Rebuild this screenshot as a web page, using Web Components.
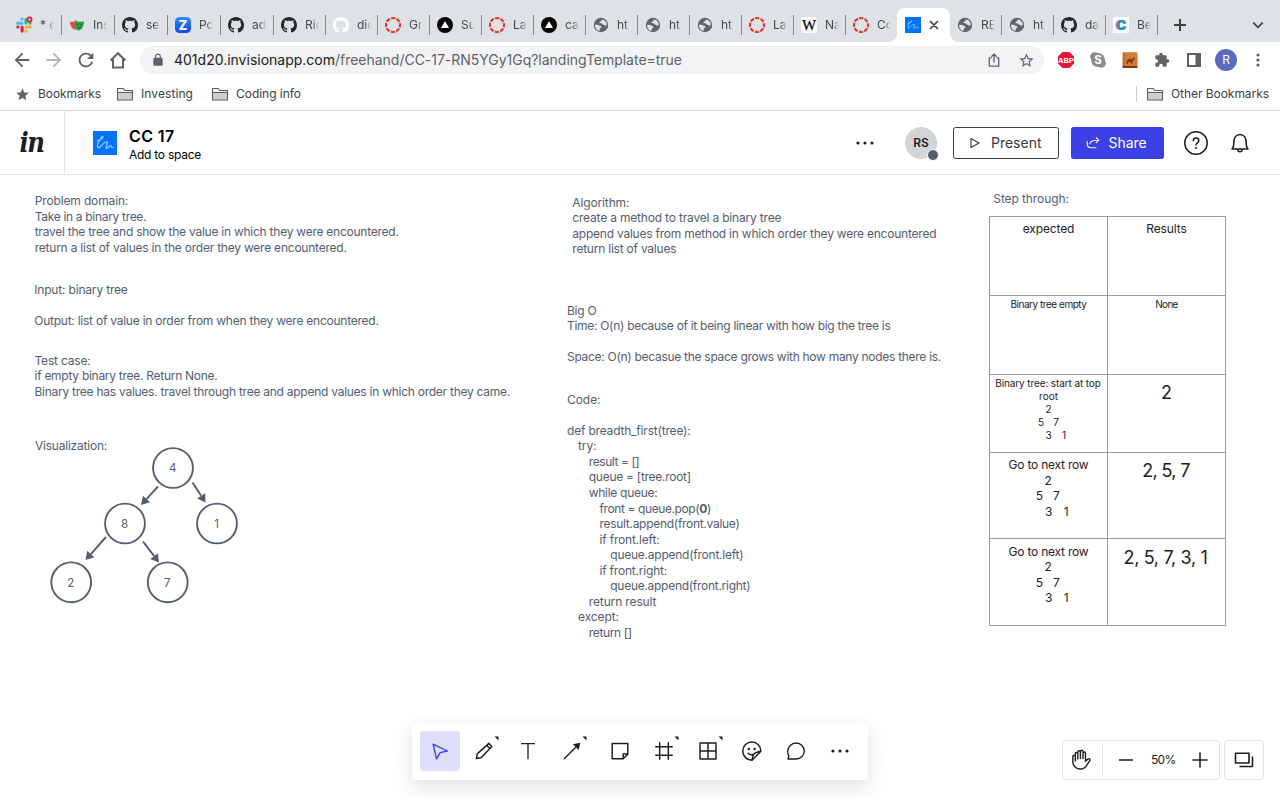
<!DOCTYPE html>
<html lang="en">
<head>
<meta charset="utf-8">
<title>CC 17</title>
<style>
html,body{margin:0;height:100%;overflow:hidden;background:#fff}
body{font-family:Inter,"Liberation Sans",sans-serif;color:#1d1d1f}
</style>
</head>
<body>
<free-app></free-app>
<script>
const GH='<path fill="currentColor" d="M8 0C3.58 0 0 3.58 0 8c0 3.54 2.29 6.53 5.47 7.59.4.07.55-.17.55-.38 0-.19-.01-.82-.01-1.49-2.01.37-2.53-.49-2.69-.94-.09-.23-.48-.94-.82-1.13-.28-.15-.68-.52-.01-.53.63-.01 1.08.58 1.23.82.72 1.21 1.87.87 2.33.66.07-.52.28-.87.51-1.07-1.78-.2-3.64-.89-3.64-3.95 0-.87.31-1.59.82-2.15-.08-.2-.36-1.02.08-2.12 0 0 .67-.21 2.2.82.64-.18 1.32-.27 2-.27.68 0 1.36.09 2 .27 1.53-1.04 2.2-.82 2.2-.82.44 1.1.16 1.92.08 2.12.51.56.82 1.27.82 2.15 0 3.07-1.87 3.75-3.65 3.95.29.25.54.73.54 1.48 0 1.07-.01 1.93-.01 2.2 0 .21.15.46.55.38A8.013 8.013 0 0016 8c0-4.42-3.58-8-8-8z"/>';
const line=(s,w=1.5)=>`<g fill="none" stroke="currentColor" stroke-width="${w}" stroke-linejoin="round" stroke-linecap="round">${s}</g>`;
/* name: [viewBox size, markup] */
const ICONS={
 slack:[16,'<g stroke-width="3.1" stroke-linecap="round" fill="none"><path stroke="#36c5f0" d="M1.7 6.2h4.2M6.1 1.8v.3"/><path stroke="#2eb67d" d="M10 2.6v3.4M14 6.1h.2"/><path stroke="#e01e5a" d="M6.1 10v4.1M1.8 10h.3"/><path stroke="#ecb22e" d="M10.2 10h4M10 14v.2"/></g><circle cx="13.5" cy="2.6" r="3" fill="#e0243c"/><circle cx="13.5" cy="2.6" r="1.1" fill="#fff"/>'],
 masks:[16,'<path fill="#e2574c" d="M1 4.5c2 .7 3.800.3 5.500-.3l2 7.200c-1.500 1.600-3.500 1.500-4.700.300C2 10 .8 7 1 4.500z"/><path fill="#2a9e44" d="M6 3c2.500 2 6.500 2.200 9 1.300.2 3.500-1.600 8.800-5.500 9.200C6.300 12.800 5.300 7.500 6 3z"/><path stroke="#0d5c22" stroke-width=".9" fill="none" d="M7.700 7l1.600.5M11.500 7.500l1.600-.3M8.300 10c1.200 1 2.500 1.100 3.800.2"/><path stroke="#8c2720" stroke-width=".7" fill="none" d="M2.500 6.700l1.300.1M3.500 10l1.500-.8"/>'],
 github:[16,GH],
 zed:[16,'<defs><linearGradient id="z" x2="0" y2="1"><stop stop-color="#2f8bff"/><stop offset="1" stop-color="#0b49e8"/></linearGradient></defs><rect width="16" height="16" rx="4.500" fill="url(#z)"/><text x="8" y="12.700" text-anchor="middle" font-family="Inter" font-weight="800" font-size="13" fill="#fff">Z</text>'],
 canvas:[16,'<circle cx="8" cy="8" r="7" fill="none" stroke="#e43b2f" stroke-width="2.2" stroke-dasharray="4.200 1.298" stroke-dashoffset="2.100"/>'],
 tri:[16,'<circle cx="8" cy="8" r="8"/><path fill="#fff" d="M8 4l4 7H4z"/>'],
 globe:[16,'<circle cx="8" cy="8" r="7.200" fill="#5f6368"/><path fill="#dee1e6" d="M8.700 2.400c.2 1.200-.5 1.700-1.500 2-.7.3-.6 1.200-1.400 1.500 1.200.7 3.100-.2 3.700 1.300.3.900 1.700.2 2.300 1.300.4.600 1.600.2 2.100-.7C14 5 11.700 2.600 8.700 2.400zM1.900 7.700c1.500.100 3.300-.1 4.300.800 1 .8 2.300.3 2.200 1.500-.1 1-1.600.8-1.500 2 0 .9-.9 1.400-.2 1.900C4 13.500 2 11 1.900 7.700z"/>'],
 wiki:[16,'<rect width="16" height="16" rx="3" fill="#fff"/><text x="8" y="12.700" text-anchor="middle" font-family="Liberation Serif" font-size="15" stroke="#000" stroke-width=".25">W</text>'],
 freehand:[24,'<path fill="#0074ff" d="M0 0h24v24H0z"/><path fill="none" stroke="#8ec4ff" stroke-width="1.400" stroke-linecap="round" stroke-linejoin="round" d="M4.500 9.800C7 9.300 10.500 7 10 5.700 9.200 4.300 3.800 12.500 4.600 15.800 5.800 19.400 10 11 13.800 10.900 16 11.300 12.200 15.500 13.400 17 15 18.200 16 14.300 17.800 14.600 18.700 15 18 17 20.300 16.600"/>'],
 cee:[16,'<rect width="16" height="16" fill="#fff"/><g text-anchor="middle" font-family="Inter" font-weight="800" font-size="13.500"><text x="7.200" y="12.700" fill="#f0483e">C</text><text x="8.800" y="13.100" fill="#2bb673">C</text><text x="8.200" y="12.900" fill="#1b95c9">C</text></g>'],
 close:[10,line('<path d="M1.500 1.500l7 7m0-7l-7 7"/>',1.7)],
 plus:[14,'<path fill="none" stroke="currentColor" stroke-width="2" d="M7 1v12M1 7h12"/>'],
 chev:[12,'<path fill="none" stroke="currentColor" stroke-width="1.800" d="M1.300 3.600L6 8.300l4.700-4.700"/>'],
 back:[24,'<path fill="currentColor" d="M20 11H7.830l5.590-5.590L12 4l-8 8 8 8 1.410-1.410L7.830 13H20v-2z"/>'],
 fwd:[24,'<path fill="currentColor" d="M12 4l-1.410 1.410L16.170 11H4v2h12.170l-5.580 5.590L12 20l8-8z"/>'],
 reload:[24,'<path fill="currentColor" d="M17.650 6.350C16.200 4.900 14.210 4 12 4c-4.420 0-7.990 3.580-7.990 8s3.570 8 7.990 8c3.730 0 6.840-2.550 7.730-6h-2.080c-.82 2.330-3.040 4-5.650 4-3.310 0-6-2.690-6-6s2.690-6 6-6c1.660 0 3.140.690 4.220 1.780L13 11h7V4l-2.350 2.350z"/>'],
 home:[22,'<path fill="none" stroke="currentColor" stroke-width="2" d="M3.600 11.500L11 4.200l7.400 7.300M6 10v8.500h10V10"/>'],
 lock:[24,'<path fill="currentColor" d="M18 8h-1V6c0-2.760-2.240-5-5-5S7 3.240 7 6v2H6c-1.100 0-2 .9-2 2v10c0 1.100.9 2 2 2h12c1.100 0 2-.9 2-2V10c0-1.100-.9-2-2-2zM9 6c0-1.660 1.340-3 3-3s3 1.340 3 3v2H9V6z"/>'],
 upload:[16,'<path fill="none" stroke="currentColor" stroke-width="1.300" stroke-linejoin="round" d="M5.500 5.800H3.300v8.400h9.400V5.800h-2.200M8 10.500V2.200M5.300 4.700L8 2l2.700 2.700"/>'],
 star:[24,'<path fill="currentColor" d="M22 9.240l-7.190-.620L12 2 9.190 8.630 2 9.240l5.460 4.730L5.820 21 12 17.270 18.180 21l-1.630-7.030L22 9.240zM12 15.400l-3.760 2.270 1-4.280-3.320-2.880 4.380-.380L12 6.100l1.710 4.040 4.380.380-3.320 2.880 1 4.280L12 15.400z"/>'],
 starf:[24,'<path fill="currentColor" d="M12 17.270L18.180 21l-1.640-7.030L22 9.240l-7.190-.610L12 2 9.190 8.630 2 9.240l5.460 4.730L5.820 21z"/>'],
 folder:[18,'<path fill="#d0d0d0" stroke="#5a5d61" stroke-width="1.100" stroke-linejoin="round" d="M1.500 15V3.500h5.700l1.500 2h7.800V15z"/><path stroke="#5a5d61" fill="none" stroke-width="1" d="M1.500 7.500h15"/><path fill="#f6f6f6" d="M2.100 4.100h4.800l1.500 2h7.500v.9H2.100z"/>'],
 abp:[18,'<path fill="#f4103c" d="M5.500 1h7L17 5.500v7L12.500 17h-7L1 12.500v-7z"/><text x="9" y="11.900" text-anchor="middle" font-family="Liberation Sans" font-weight="700" font-size="7.500" fill="#fff">ABP</text>'],
 skype:[16,'<g fill="#8c8c8c"><circle cx="8" cy="8" r="7"/><circle cx="4.700" cy="4.700" r="4.500"/><circle cx="11.300" cy="11.300" r="4.500"/></g><text x="8" y="12.200" text-anchor="middle" font-family="Inter" font-weight="700" font-size="11.500" fill="#fff">S</text>'],
 camel:[16,'<rect x=".5" y=".3" width="15" height="15.400" rx="1.200" fill="#d27a35"/><path fill="#713b16" d="M.5 14h15v1.200a1 1 0 01-1 .8H1.500a1 1 0 01-1-.8z"/><path stroke="#8a491b" fill="none" stroke-width="1" stroke-dasharray="1 1" d="M2 1v13"/><path fill="#6e3814" d="M4.600 12l.5-3.500c.8-2 1.500-2 2.200-.8.8-1.600 1.700-1.300 2.300.4.900.1 1-2.200 2-2.600l1.300.8-1 .6c-.4 1.500-.8 2.200-1.700 2.700L10 12H9l-.2-2.200H6.500L5.700 12z"/>'],
 ext:[24,'<path fill="currentColor" d="M20.500 11H19V7c0-1.100-.9-2-2-2h-4V3.500C13 2.120 11.880 1 10.500 1S8 2.120 8 3.500V5H4c-1.100 0-1.990.9-1.990 2v3.800H3.500c1.490 0 2.700 1.210 2.700 2.700s-1.210 2.700-2.700 2.700H2V20c0 1.100.9 2 2 2h3.800v-1.500c0-1.490 1.210-2.700 2.700-2.700 1.490 0 2.700 1.210 2.700 2.700V22H17c1.100 0 2-.9 2-2v-4h1.500c1.380 0 2.500-1.120 2.500-2.500S21.880 11 20.500 11z"/>'],
 panel:[16,'<path fill="currentColor" fill-rule="evenodd" d="M1 1h14v14H1zM3 3v10h6.500V3z"/>'],
 vdots:[16,'<g fill="currentColor"><circle cx="8" cy="3" r="1.600"/><circle cx="8" cy="8" r="1.600"/><circle cx="8" cy="13" r="1.600"/></g>'],
 dots:[24,'<g fill="currentColor"><circle cx="5" cy="12" r="1.600"/><circle cx="12" cy="12" r="1.600"/><circle cx="19" cy="12" r="1.600"/></g>'],
 play:[12,line('<path d="M2 1.600l8 4.400-8 4.400z"/>',1.1)],
 share:[14,line('<path d="M1.200 5.500v2.200c0 3 1.500 4 4 4h4.700M3.800 7.800C4.600 5 6.500 4.200 12.800 4.200M10.200 1.600l2.600 2.600-2.600 2.600"/>',1.1)],
 help:[24,line('<circle cx="12" cy="12" r="11.200"/><path d="M9.300 9.700c0-3.500 5.500-3.500 5.500 0 0 2.200-2.800 2.100-2.800 4.400"/>',1.5)+'<circle cx="12" cy="17" r="1" fill="currentColor"/>'],
 bell:[24,line('<path d="M4 18c1.500-1.300 1.800-3.300 1.800-6.500 0-4.800 2.400-8 6.200-8s6.200 3.200 6.200 8c0 3.200.3 5.200 1.800 6.500zM9.800 18.500c.3 3 4.100 3 4.400 0"/>',1.6)],
 cursor:[24,line('<path d="M4.500 4.500l15.500 7.500-7.800 1.700-4 6.800z"/>',1.5)],
 pen:[24,line('<path d="M3.700 20.200l.9-5.100L17.300 3.700l3.200 3.300L8.800 19.300zM15 5.900l3.200 3.200"/>',1.6)],
 text:[24,line('<path d="M5 4h14M12 4v16.500"/>',1.4)],
 arrow:[24,line('<path d="M3.500 20.500L18 6"/>',1.5)+'<path fill="currentColor" d="M13 4.700l8-1.700-1.700 8z"/>'],
 note:[24,line('<path d="M3.500 3.700h17v11.800L15.500 20.500h-12zM20.500 15.300h-5v5"/>',1.600)],
 frame:[24,line('<path d="M7.300 3v18M16.700 3v18M3 7.300h18M3 16.700h18"/>',1.600)],
 grid:[24,line('<path d="M3.300 3.300h17.400v17.400H3.300zM12 3.300v17.400M3.300 12h17.400"/>',1.600)],
 sticker:[24,line('<path d="M20.900 12.200A9.100 9.100 0 1012 21.200zM12 21.200c1-4-.2-7.500 8.900-9M8 14.300c1.300 1.600 3 1.700 4.800 1.300"/>',1.500)+'<circle cx="8.800" cy="10" r="1.200" fill="currentColor"/><circle cx="14.600" cy="10" r="1.200" fill="currentColor"/>'],
 bubble:[24,line('<path d="M3.300 20.700l.9-3.500C2.900 15.500 2.900 14 2.900 12.300 3 7.300 7.200 3.300 12.200 3.300c5 0 8.800 4 8.800 8.700s-3.800 8.700-8.800 8.700z"/>',1.5)],
 flag:[5,'<path fill="currentColor" d="M.5.500h4v4z"/>'],
 hand:[24,line('<path d="M6.300 13V5.800a1.200 1.200 0 012.500 0V11M8.800 10.500V4.100a1.300 1.300 0 012.600 0V10.500M11.400 10V3.600a1.300 1.300 0 012.600 0V10.500M14 10.500V5.200a1.250 1.250 0 012.500 0V13.200l2.400-2.200c1.300-.8 2.700.5 1.900 1.700l-3.200 4.600c-1.500 2.500-3.300 3.700-5.900 3.700-4.600 0-7.900-3-7.900-7.500V8.500a1.250 1.250 0 012.500 0"/>',1.4)],
 minus:[16,'<path stroke="currentColor" stroke-width="1.500" d="M1 8h14"/>'],
 plusz:[16,'<path stroke="currentColor" stroke-width="1.500" d="M.5 8h15M8 .5v15"/>'],
 layers:[24,'<path fill="none" stroke="currentColor" stroke-width="1.600" stroke-linejoin="round" d="M3.500 5.200h13.500v9.800H3.500zM20.500 8.500v10H7.500"/>']
};

class Base extends HTMLElement{
  connectedCallback(){
    if(this.shadowRoot)return;
    this.attachShadow({mode:'open'}).innerHTML=`<style>*{box-sizing:border-box}${this.css()}</style>${this.html()}`;
    this.ready&&this.ready();
  }
}
const def=(name,css,html,ready)=>customElements.define(name,class extends Base{
  css(){return typeof css==='function'?css(this):css}
  html(){return typeof html==='function'?html(this):html}
  ready(){ready&&ready(this)}
});

def('ui-icon',':host{display:block;flex:none}svg{display:block;overflow:visible}',e=>{
  const [vb,m]=ICONS[e.getAttribute('name')],s=e.getAttribute('size')||vb;
  return `<svg width="${s}" height="${s}" viewBox="0 0 ${vb} ${vb}">${m}</svg>`;
});

/* One line of text tracked so that it spans the width given in "w". */
def('fit-text',':host{display:block;white-space:pre;flex:none}span{display:inline-block}','<span><slot></slot></span>',e=>{
  const w=+e.getAttribute('w'),s=e.shadowRoot.querySelector('span');
  if(!w)return;
  const n=e.textContent.length,nat=s.getBoundingClientRect().width;
  s.style.letterSpacing=((w-nat)/n).toFixed(4)+'px';
});

def('browser-tab',`
:host{display:flex;align-items:center;height:42px;padding:8px 0 0 7px;width:var(--w,52px);position:relative;color:#45484c;flex:none}
.t{margin-left:8px;width:14px;overflow:hidden;white-space:nowrap;font-size:12px;line-height:16px;-webkit-mask-image:linear-gradient(90deg,#000 55%,transparent)}
.s{margin-left:auto;width:1px;height:20px;background:#85888d}
:host([wide]){--w:53px}
:host([active]){background:#fff;height:34px;align-self:flex-end;padding:0 0 0 8px;border-radius:8px 8px 0 0;--w:53px;margin-left:-1px;z-index:1}
:host([active])::before,:host([active])::after{content:"";position:absolute;bottom:0;width:8px;height:8px}
:host([active])::before{left:-8px;background:radial-gradient(circle at 0 0,transparent 7.500px,#fff 8px)}
:host([active])::after{right:-8px;background:radial-gradient(circle at 100% 0,transparent 7.500px,#fff 8px)}
.x{margin-left:8px;color:#3c4043}
`,e=>`<ui-icon name="${e.getAttribute('icon')}" size="16" style="color:${e.getAttribute('tint')||'#24292f'}"></ui-icon>`+
 (e.hasAttribute('active')?'<ui-icon class="x" name="close" size="10"></ui-icon>':`<div class="t"><slot></slot></div>${e.hasAttribute('last')?'':'<div class="s"></div>'}`));

const TABS=[['slack','* c',1],['masks','Ins',1],['github','se',1],['zed','Po',1],['github','ad',1],['github','Ric'],['github','dic',0,'#fff'],['canvas','Gr'],['tri','Su'],['canvas','La'],['tri','ca'],['globe','ht'],['globe','ht'],['globe','ht'],['canvas','La'],['wiki','Na'],['canvas','Co'],0,['globe','RE'],['globe','ht'],['github','da'],['cee','Be']];
def('tab-strip',`:host{display:flex;background:#dee1e6;height:42px;padding-left:9px;align-items:flex-start;color:#3c4043}
.p{margin:18px 0 0 15px}.c{margin:19px 16px 0 auto}`,
()=>TABS.map((t,i)=>t?`<browser-tab icon="${t[0]}" ${t[2]?'wide':''} ${t[3]?`tint="${t[3]}"`:''} ${i===16?'last':''}>${t[1]}</browser-tab>`:'<browser-tab active icon="freehand"></browser-tab>').join('')+
'<ui-icon class="p" name="plus" size="14"></ui-icon><ui-icon class="c" name="chev" size="12"></ui-icon>');

def('nav-bar',`:host{display:flex;align-items:center;height:36px;padding:0 6px;color:#5f6368;background:#fff}
.b{width:32px;height:32px;display:flex;align-items:center;justify-content:center}
.o{flex:1;height:28px;border-radius:14px;background:#f1f3f4;margin:0 6px;display:flex;align-items:center;padding:0 2px 0 11px;font-size:14px;line-height:20px}
.o .l{margin-right:9px}.d{color:#202124}.r{margin-left:auto;display:flex}.dim{color:#b4b6b9}
.av{width:22px;height:22px;border-radius:50%;background:#5c6bc0;color:#fff;font-size:12px;line-height:22px;text-align:center}`,
`<div class="b"><ui-icon name="back" size="22"></ui-icon></div><div class="b dim"><ui-icon name="fwd" size="22"></ui-icon></div><div class="b"><ui-icon name="reload" size="22"></ui-icon></div><div class="b"><ui-icon name="home" size="22"></ui-icon></div>
<div class="o"><ui-icon class="l" name="lock" size="14"></ui-icon><fit-text class="d" w="161">401d20.invisionapp.com</fit-text><fit-text w="347">/freehand/CC-17-RN5YGy1Gq?landingTemplate=true</fit-text>
<div class="r"><div class="b"><ui-icon name="upload" size="16"></ui-icon></div><div class="b"><ui-icon name="star" size="17"></ui-icon></div></div></div>
<div class="b"><ui-icon name="abp" size="18"></ui-icon></div><div class="b"><ui-icon name="skype" size="16"></ui-icon></div><div class="b"><ui-icon name="camel" size="16"></ui-icon></div><div class="b"><ui-icon name="ext" size="16"></ui-icon></div><div class="b"><ui-icon name="panel" size="16"></ui-icon></div><div class="b"><div class="av">R</div></div><div class="b"><ui-icon name="vdots" size="16"></ui-icon></div>`);

def('bookmark-bar',`:host{display:flex;align-items:center;height:33px;border-bottom:1px solid #d6d7d9;padding:0 11px 0 15px;font-size:12px;line-height:16px;color:#3c4043;background:#fff;box-sizing:border-box}
ui-icon{margin-right:7px}.st{color:#5f6368;margin-right:8px}fit-text{margin-right:15px}.sep{margin-left:auto;width:1px;height:16px;background:#c9cbce;margin-right:9px}fit-text:last-child{margin-right:0}`,
`<ui-icon class="st" name="starf" size="15"></ui-icon><fit-text w="63">Bookmarks</fit-text><ui-icon name="folder" size="18"></ui-icon><fit-text w="52">Investing</fit-text><ui-icon name="folder" size="18" style="margin-left:3px"></ui-icon><fit-text w="65">Coding info</fit-text><div class="sep"></div><ui-icon name="folder" size="18"></ui-icon><fit-text w="98">Other Bookmarks</fit-text>`);

def('app-header',`:host{display:flex;align-items:center;height:64px;box-sizing:border-box;border-bottom:1px solid #e4e5e7;padding-right:28px;background:#fff;color:#1d1d1f}
.logo{width:65px;height:63px;border-right:1px solid #e4e5e7;display:flex;align-items:center;justify-content:center;font:italic 700 27px/30px "DejaVu Serif Condensed","DejaVu Serif",serif;font-stretch:condensed;letter-spacing:-1.500px;padding:1px 1px 0 0}
.fh{margin-left:28px}.t{margin-left:12px;display:flex;flex-direction:column;color:#000;padding-top:4px}
.n{font-size:16px;font-weight:600;line-height:20px}.a{font-size:12px;line-height:18px}
.r{margin-left:auto;display:flex;align-items:center}
.av{width:32px;height:32px;border-radius:50%;background:#d3d4d6;margin:0 16px 0 28px;font-size:12px;font-weight:600;line-height:32px;text-align:center;position:relative}
.av i{position:absolute;right:-2px;bottom:-2px;width:12px;height:12px;box-sizing:border-box;border:1.700px solid #fff;border-radius:50%;background:#545c70}
.btn{display:flex;align-items:center;height:32px;border-radius:2.500px;font-size:14px;line-height:20px}
.p{width:106px;border:1px solid #3c3c40;padding-left:15px;margin-right:12px;color:#3a3a3f}.p ui-icon{margin-right:10px}
.s{width:93px;background:#3b3fe6;color:#fff;padding-left:15px;margin-right:20px}.s ui-icon{margin-right:8.500px}
.h{margin-right:20px}`,
`<div class="logo">in</div><ui-icon class="fh" name="freehand" size="24"></ui-icon>
<div class="t"><fit-text class="n" w="45.500">CC 17</fit-text><fit-text class="a" w="72">Add to space</fit-text></div>
<div class="r"><ui-icon name="dots" size="24"></ui-icon><div class="av">RS<i></i></div>
<div class="btn p"><ui-icon name="play" size="12"></ui-icon><fit-text w="50.500">Present</fit-text></div>
<div class="btn s"><ui-icon name="share" size="14"></ui-icon><fit-text w="38">Share</fit-text></div>
<ui-icon class="h" name="help" size="24"></ui-icon><ui-icon name="bell" size="24"></ui-icon></div>`);

/* A text object on the board: lines are "indent|width|text"; an empty line keeps its height. */
def('board-note',e=>`:host{position:absolute;left:${e.getAttribute('x')}px;top:${e.getAttribute('y')-7.7}px;font-size:12px;line-height:15.550px;color:#555d72}
fit-text{height:15.550px}`,
e=>e.getAttribute('lines').split('\n').map(l=>{
  if(!l.trim())return '<fit-text></fit-text>';
  const [i,w,...t]=l.split('|');return `<fit-text w="${w}" style="margin-left:${i}px">${t.join('|')}</fit-text>`;
}).join(''));

def('tree-diagram',':host{position:absolute;left:40px;top:265px}svg{display:block}text{font-family:Inter,sans-serif;font-size:11.5px;text-anchor:middle;fill:#555d72}',()=>{
  const nodes=[[173,468,4],[125,523.500,8],[217,523.500,1],[71.200,582.300,2],[167.700,582.300,7]];
  const arr=[[158,486.500,141,505],[192.500,482.500,205.500,502.500],[106,537,85.500,560],[143,541.500,159,562.500]];
  return `<svg width="210" height="350" viewBox="40 440 210 350">${arr.map(([a,b,c,d])=>{
    const L=Math.hypot(c-a,d-b),ux=(c-a)/L,uy=(d-b)/L,k=8,h=4.800,bx=c-ux*k,by=d-uy*k;
    return `<path stroke="#555d72" stroke-width="1.900" d="M${a} ${b}L${bx} ${by}"/><path fill="#555d72" d="M${c} ${d}L${bx-uy*h} ${by+ux*h}L${bx+uy*h} ${by-ux*h}z"/>`;
  }).join('')}${nodes.map(([x,y,t])=>`<circle cx="${x}" cy="${y}" r="19.900" fill="#fff" stroke="#555d72" stroke-width="1.900"/><text x="${x-.4}" y="${y+4.200}">${t}</text>`).join('')}</svg>`;
});

def('step-table',`:host{position:absolute;left:989px;top:41px;display:grid;grid-template-columns:118px 119px;grid-template-rows:79px 79px 78px 86px 88px;color:#1f2126}
.c{border:solid #959dab;border-width:1px 0 0 1px;display:flex;flex-direction:column;align-items:center;padding-top:4px;font-size:12px;line-height:15.550px}
.r{border-right-width:1px}.b{border-bottom-width:1px}
.s{font-size:10px;line-height:13px;padding-top:2.400px}.l{font-size:18px;line-height:23px;padding-top:6px}
.b{padding-top:4.500px}.l.b{padding-top:7px}`,()=>{
  const f=(w,t,o=0)=>`<fit-text w="${w}" style="position:relative;left:${o}px">${t}</fit-text>`;
  const row=f(80,'Go to next row')+f(7,'2',-.5)+f(24,'5   7',-.7)+f(24,'3   1',8.5);
  return `<div class="c">${f(51.500,'expected')}</div><div class="c r">${f(40.500,'Results')}</div>
<div class="c s">${f(76,'Binary tree empty')}</div><div class="c s r">${f(22.500,'None')}</div>
<div class="c s">${f(105.500,'Binary tree: start at top',-.5)}${f(19,'root')}${f(6,'2')}${f(21,'5   7')}${f(21,'3   1',7.500)}</div><div class="c l r">${f(11,'2')}</div>
<div class="c">${row}</div><div class="c l r">${f(47.500,'2, 5, 7',-.5)}</div><div class="c b">${row}</div><div class="c l r b">${f(84,'2, 5, 7, 3, 1',-1)}</div>`;
});

def('tool-bar',`:host{position:absolute;left:412px;bottom:20px;width:456px;height:57px;display:flex;gap:4px;padding:8px;box-sizing:border-box;background:#fff;border-radius:3px;box-shadow:0 8px 22px rgba(0,0,0,.11),0 0 8px rgba(0,0,0,.03);color:#1d1d1f}
.i{width:40px;height:40px;border-radius:3px;display:flex;align-items:center;justify-content:center;position:relative}
.on{background:#dddff9;color:#3b3fe6}.gap{margin-left:4px}
.f{position:absolute;right:-1px;top:4.500px}`,
()=>[['cursor','on'],['pen','',1],['text'],['arrow','',1],['note','gap'],['frame','',1],['grid','',1],['sticker'],['bubble'],['dots']]
.map(([n,c='',f])=>`<div class="i ${c}"><ui-icon name="${n}" size="${n==='sticker'||n==='dots'?24:22}"></ui-icon>${f?`<ui-icon class="f" name="flag" size="5" style="right:5px"></ui-icon>`:''}</div>`).join(''));

def('zoom-controls',`:host{position:absolute;right:16px;bottom:20px;display:flex;gap:4px;color:#1d1d1f}
.b{height:40px;border:1px solid #e4e5e7;border-radius:4px;background:#fff;display:flex;align-items:center;justify-content:center}
.z{width:158px;justify-content:flex-start;padding-left:6px}.d{width:1px;height:32px;background:#e4e5e7;margin:0 15px 0 9px}
.l{width:40px}fit-text{font-size:12px;line-height:16px;margin:0 16px 0 17px;width:25px}`,
`<div class="b z"><ui-icon name="hand" size="24"></ui-icon><div class="d"></div><ui-icon name="minus" size="16"></ui-icon><fit-text w="24.500">50%</fit-text><ui-icon name="plusz" size="16"></ui-icon></div><div class="b l"><ui-icon name="layers" size="24"></ui-icon></div>`);

const NOTES=[
[34.7,201,'0|93.5|Problem domain:\n0|111.5|Take in a binary tree.\n0|364|travel the tree and show the value in which they were encountered.\n0|312|return a list of values in the order they were encountered.'],
[34.2,289.4,'0|93.500|Input: binary tree\n\n0|344.500|Output: list of value in order from when they were encountered.'],
[34.5,360.5,'0|56|Test case:\n0|183|if empty binary tree. Return None.\n0|475.500|Binary tree has values. travel through tree and append values in which order they came.'],
[35,446,'0|72|Visualization:'],
[572.3,202.4,'0|57|Algorithm:\n0|209|create a method to travel a binary tree\n0|364|append values from method in which order they were encountered\n0|104|return list of values'],
[567,310.4,'0|29.500|Big O\n0|323.500|Time: O(n) because of it being linear with how big the tree is\n\n0|374|Space: O(n) becasue the space grows with how many nodes there is.'],
[567,399.4,'0|33.500|Code:\n\n0|123.500|def breadth_first(tree):\n11|18.500|try:\n21.800|50.500|result = []\n21.800|102|queue = [tree.root]\n21.800|68.500|while queue:\n32.500|111.500|front = queue.pop(<b>0</b>)\n32.500|140|result.append(front.value)\n32.500|60|if front.left:\n43.300|133|queue.append(front.left)\n32.500|67.500|if front.right:\n43.300|140|queue.append(front.right)\n21.800|67.500|return result\n11|41|except:\n21.800|43|return []'],
[993.3,198.5,'0|75.500|Step through:']
];
def('free-board',':host{display:block;position:relative;flex:1;background:#fff;overflow:hidden}',
()=>NOTES.map(([x,y,l])=>`<board-note x="${x}" y="${y-175}" lines="${l}"></board-note>`).join('')+
'<tree-diagram></tree-diagram><step-table></step-table><tool-bar></tool-bar><zoom-controls></zoom-controls>');

def('free-app',':host{display:flex;flex-direction:column;width:1280px;height:800px}',
'<tab-strip></tab-strip><nav-bar></nav-bar><bookmark-bar></bookmark-bar><app-header></app-header><free-board></free-board>');
</script>
</body>
</html>
